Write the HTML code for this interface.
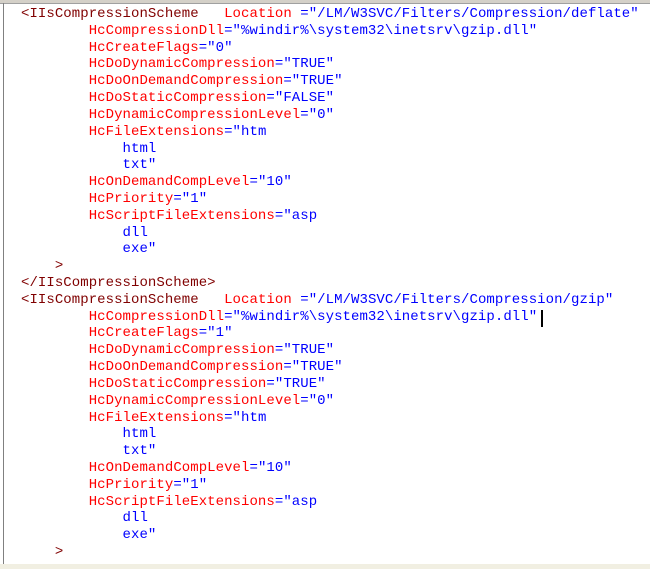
<!DOCTYPE html>
<html><head><style>
html,body{margin:0;padding:0;background:#fff;}
.wrap{position:absolute;left:0;top:0;width:650px;height:569px;overflow:hidden;background:#fff;}
.tb{position:absolute;left:0;top:0;width:650px;height:3px;background:#d4d0c8;border-bottom:1px solid #a0a0a0;}
.lb{position:absolute;left:3px;top:3px;width:1px;height:562px;background:#808080;}
.bb{position:absolute;left:0;top:564px;width:650px;height:5px;background:#f1efe2;}
pre{position:absolute;left:21px;top:6px;margin:0;font-family:"Liberation Mono","DejaVu Sans Mono",monospace;font-size:14px;letter-spacing:0.06px;line-height:16.82px;color:#0000ff;}
.e{color:#800000}.a{color:#ff0000}
.cur{position:absolute;left:541px;top:310px;width:2px;height:17px;background:#000;}
</style></head><body><div class="wrap">
<div class="tb"></div><div class="lb"></div><div class="bb"></div>
<pre><span class="e">&lt;IIsCompressionScheme</span>   <span class="a">Location</span> =″/LM/W3SVC/Filters/Compression/deflate″
        <span class="a">HcCompressionDll</span>=″%windir%\system32\inetsrv\gzip.dll″
        <span class="a">HcCreateFlags</span>=″0″
        <span class="a">HcDoDynamicCompression</span>=″TRUE″
        <span class="a">HcDoOnDemandCompression</span>=″TRUE″
        <span class="a">HcDoStaticCompression</span>=″FALSE″
        <span class="a">HcDynamicCompressionLevel</span>=″0″
        <span class="a">HcFileExtensions</span>=″htm
            html
            txt″
        <span class="a">HcOnDemandCompLevel</span>=″10″
        <span class="a">HcPriority</span>=″1″
        <span class="a">HcScriptFileExtensions</span>=″asp
            dll
            exe″
    <span class="e">&gt;</span>
<span class="e">&lt;/IIsCompressionScheme&gt;</span>
<span class="e">&lt;IIsCompressionScheme</span>   <span class="a">Location</span> =″/LM/W3SVC/Filters/Compression/gzip″
        <span class="a">HcCompressionDll</span>=″%windir%\system32\inetsrv\gzip.dll″
        <span class="a">HcCreateFlags</span>=″1″
        <span class="a">HcDoDynamicCompression</span>=″TRUE″
        <span class="a">HcDoOnDemandCompression</span>=″TRUE″
        <span class="a">HcDoStaticCompression</span>=″TRUE″
        <span class="a">HcDynamicCompressionLevel</span>=″0″
        <span class="a">HcFileExtensions</span>=″htm
            html
            txt″
        <span class="a">HcOnDemandCompLevel</span>=″10″
        <span class="a">HcPriority</span>=″1″
        <span class="a">HcScriptFileExtensions</span>=″asp
            dll
            exe″
    <span class="e">&gt;</span></pre>
<div class="cur"></div>
</div></body></html>
